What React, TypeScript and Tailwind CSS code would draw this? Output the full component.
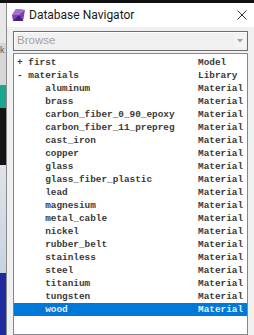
const rows: { label: string; kind: string; selected?: boolean }[] = [
  { label: '+ first', kind: 'Model' },
  { label: '- materials', kind: 'Library' },
  { label: '     aluminum', kind: 'Material' },
  { label: '     brass', kind: 'Material' },
  { label: '     carbon_fiber_0_90_epoxy', kind: 'Material' },
  { label: '     carbon_fiber_11_prepreg', kind: 'Material' },
  { label: '     cast_iron', kind: 'Material' },
  { label: '     copper', kind: 'Material' },
  { label: '     glass', kind: 'Material' },
  { label: '     glass_fiber_plastic', kind: 'Material' },
  { label: '     lead', kind: 'Material' },
  { label: '     magnesium', kind: 'Material' },
  { label: '     metal_cable', kind: 'Material' },
  { label: '     nickel', kind: 'Material' },
  { label: '     rubber_belt', kind: 'Material' },
  { label: '     stainless', kind: 'Material' },
  { label: '     steel', kind: 'Material' },
  { label: '     titanium', kind: 'Material' },
  { label: '     tungsten', kind: 'Material' },
  { label: '     wood', kind: 'Material', selected: true },
];

function AppIcon() {
  return (
    <svg width="14" height="13" viewBox="0 0 14 13">
      <polygon points="4,0 13,1 11,12 1,12 0,6" fill="#7b3fb0" />
      <polygon points="4,0 13,1 7,6 0,6" fill="#a76fd6" />
      <polygon points="7,6 11,12 1,12" fill="#4a1c78" />
    </svg>
  );
}

function CloseIcon() {
  return (
    <svg width="10" height="10" viewBox="0 0 10 10">
      <path d="M0.5 0.5 L9.5 9.5 M9.5 0.5 L0.5 9.5" stroke="#333" strokeWidth="1" />
    </svg>
  );
}

export default function App() {
  return (
    <div className="w-[254px] h-[335px] overflow-hidden bg-black flex flex-col">
      <div className="h-[3px] shrink-0 bg-[#111]" />
      <div className="flex flex-1 min-h-0">
        {/* strip of the app behind the window */}
        <div className="w-[6px] shrink-0 flex flex-col">
          <div className="h-[40px] bg-[#e8e8e8]" />
          <div className="h-[42px] bg-[#d6d6d6] text-[9px] leading-[14px] text-[#555] overflow-hidden font-['Liberation_Sans',sans-serif]">k</div>
          <div className="h-[23px] bg-[#1aa58f]" />
          <div className="h-[57px] bg-[#141414]" />
          <div className="h-[108px] bg-gradient-to-b from-[#dfe3e8] to-[#c9d3dd]" />
          <div className="flex-1 bg-[#1f2a9c]" />
        </div>

        {/* window */}
        <div className="flex-1 flex flex-col border-l border-[#8a8a8a] bg-[#f0f0f0]">
          <div className="h-[24px] shrink-0 bg-white flex items-center pl-[5px] pr-[6px]">
            <AppIcon />
            <span className="ml-[3px] text-[12px] text-[#1a1a1a] font-['Roboto','Liberation_Sans',sans-serif]">
              Database Navigator
            </span>
            <span className="ml-auto mr-[1px] flex">
              <CloseIcon />
            </span>
          </div>

          <div className="flex-1 flex flex-col pl-[6px] pr-[6px] pt-[4px]">
            <div className="h-[20px] shrink-0 border border-[#6e6e6e] bg-[#f0f0f0] flex items-center shadow-[inset_1px_1px_0_#ffffff]">
              <span className="pl-[3px] text-[11.5px] text-[#a3a3a3] font-['Liberation_Sans',sans-serif]">Browse</span>
              <span className="ml-auto mr-[1px] w-[12px] h-[14px] bg-[#f4f4f4] flex items-center justify-center">
                <svg width="6" height="4" viewBox="0 0 6 4">
                  <polygon points="0,0 6,0 3,3.5" fill="#a0a0a0" />
                </svg>
              </span>
            </div>

            <div className="mt-[2px] flex-1 border border-[#828790] bg-white pt-[2px] font-['Liberation_Mono',monospace] font-bold text-[9.4px] leading-[13px]">
              {rows.map((r) => (
                <div
                  key={r.label}
                  className={`h-[13px] flex whitespace-pre pl-[3px] ${
                    r.selected ? 'bg-[#0078d7] text-[#e8f0fa]' : 'text-[#3a3a3a]'
                  }`}
                >
                  <span className="w-[181px] shrink-0">{r.label}</span>
                  <span>{r.kind}</span>
                </div>
              ))}
            </div>
          </div>
        </div>
      </div>
    </div>
  );
}
